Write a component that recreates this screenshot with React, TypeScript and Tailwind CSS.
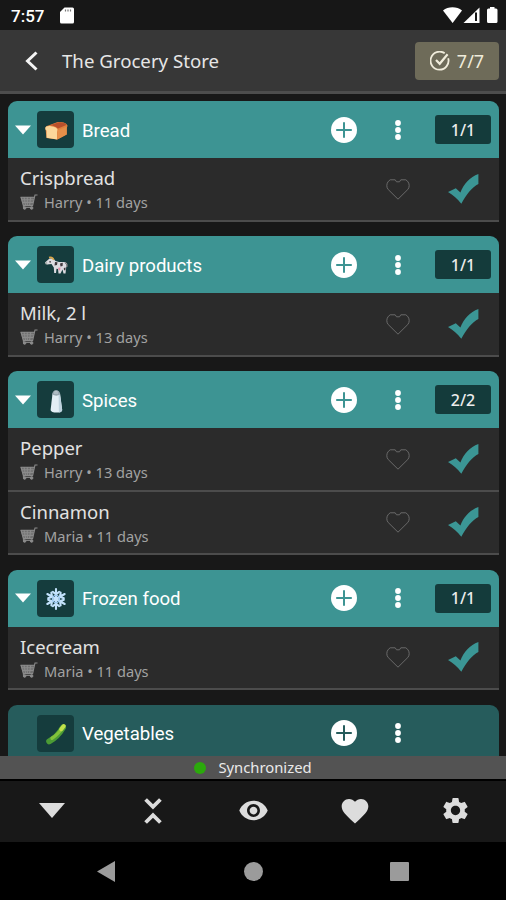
import { MdFavorite, MdSettings, MdVisibility } from "react-icons/md";

type Item = { name: string; user: string; days: number };
type Group = {
  name: string;
  icon: () => React.JSX.Element;
  count?: string;
  items: Item[];
};

function BreadIcon() {
  return (
    <svg width="26" height="26" viewBox="0 0 26 26">
      <path d="M2.5 10.5C2 8.5 4 7.7 6 7.2L14 4.2C18 3.2 24 4.6 24.5 7.6C24.6 8.8 23.8 9.4 23.6 10V16.5L14.5 21.5L3.5 20Z" fill="#df813e" />
      <path d="M7 7.2L15 4.4C19 3.6 23 5 23.4 7L15 10.5C13 8.6 10 7.4 7 7.2Z" fill="#b9502c" />
      <path d="M2.3 10.6C2.2 8.2 5 7.8 8 8.2C12 8.7 14.6 10 14.6 12.2C14.6 13.2 14 13.7 14 14.2V21.6L3.6 19.8V12.6C2.8 12.2 2.4 11.6 2.3 10.6Z" fill="#fbd79a" />
      <path d="M14.4 12.2L23.8 8.8V16.4L14.2 21.6Z" fill="#e58f49" />
    </svg>
  );
}

function CowIcon() {
  return (
    <svg width="26" height="26" viewBox="0 0 26 26">
      <path d="M2 9.5L6.5 5.5L10 5.2L12.5 8L16 9L21.5 9L23.5 12L22.5 20.5H20.5L19.5 16.5L17.5 20.5H15.5L15 16L13.5 15.8L13 20H11.2L10.8 14.5L8.5 11L4 11.6Z" fill="#dcdbe0" />
      <path d="M6 4.6C8 4 10 5 10.8 7" stroke="#d7a64a" strokeWidth="1.6" fill="none" />
      <path d="M12 9L14.5 9.2L14 12L11.5 12.4ZM17 10.5L19.8 9.8L19.6 13L17.5 13.6ZM6.2 8.2H8V9.6H6.4ZM20.8 15L22.6 14.5L22.4 17.2H21Z" fill="#40383c" />
      <path d="M15.2 14.8L17.6 14.6L17 17.5L15.4 17Z" fill="#e58aa2" />
      <path d="M22 9.5C24.2 9.6 24.2 12 23.8 14" stroke="#a89a9c" fill="none" />
      <path d="M2 9.4L4 8.8L4.4 11.4L2.6 11.3Z" fill="#aeb5b3" />
    </svg>
  );
}

function SaltIcon() {
  return (
    <svg width="26" height="26" viewBox="0 0 26 26">
      <path d="M9.5 5.5L7.6 22C7.6 25.4 19.2 25.4 19.2 22L17 5.5Z" fill="#e3eef5" />
      <path d="M15.6 7L17 6L19.2 22C19.1 24 17 24.5 15.9 24.5Z" fill="#bfd3df" />
      <path d="M9.2 6.5C9.2 .8 17.2 .8 17.2 6.5C15 8 11.5 8 9.2 6.5Z" fill="#98a8b1" />
      <path d="M11.5 3.2H14.5M11 5H15" stroke="#d6e0e5" strokeWidth=".7" />
    </svg>
  );
}

function SnowIcon() {
  return (
    <svg width="26" height="26" viewBox="0 0 26 26" fill="none" strokeLinecap="round">
      {[0, 60, 120, 180, 240, 300].map((angle) => (
        <g key={angle} transform={`rotate(${angle} 13 13)`}>
          <path d="M13 13V3M13 8.4L9.8 5.8M13 8.4L16.2 5.8" stroke="#c3e2fb" strokeWidth="2.1" />
        </g>
      ))}
      <circle cx="13" cy="13" r="3.6" stroke="#9cc8f0" strokeWidth="1.4" />
    </svg>
  );
}

function CucumberIcon() {
  return (
    <svg width="26" height="26" viewBox="0 0 26 26" fill="none" strokeLinecap="round">
      <path d="M6.2 20.3C11.5 17.6 16.4 12.6 20 6.5" stroke="#4b9b35" strokeWidth="6" />
      <path d="M9 17.3C13.5 14.4 17 10.8 19.8 6" stroke="#82c23a" strokeWidth="3.4" />
      <path d="M18.2 8.2L20.8 5" stroke="#c2e14c" strokeWidth="4" />
    </svg>
  );
}

function CartIcon() {
  return (
    <svg width="18" height="17" viewBox="0 0 18 17" fill="none" stroke="#8b8b8b">
      <path d="M.5 3H14L12.4 11H3Z" fill="#6f6f6f" stroke="none" />
      <path d="M.5 3.2H14M1.3 5.8H13.4M2 8.4H13M4 3L5.5 11M7.3 3V11M10.8 3L9.6 11M17.5 1H15L12.6 11.6H3.4L1 3" strokeWidth="1.1" />
      <path d="M3.4 11.6V13.4H12.8" />
      <circle cx="4.6" cy="14" r="1.3" fill="#8b8b8b" />
      <circle cx="11.6" cy="14" r="1.3" fill="#8b8b8b" />
    </svg>
  );
}

const groups: Group[] = [
  { name: "Bread", icon: BreadIcon, count: "1/1", items: [{ name: "Crispbread", user: "Harry", days: 11 }] },
  { name: "Dairy products", icon: CowIcon, count: "1/1", items: [{ name: "Milk, 2 l", user: "Harry", days: 13 }] },
  {
    name: "Spices",
    icon: SaltIcon,
    count: "2/2",
    items: [
      { name: "Pepper", user: "Harry", days: 13 },
      { name: "Cinnamon", user: "Maria", days: 11 },
    ],
  },
  { name: "Frozen food", icon: SnowIcon, count: "1/1", items: [{ name: "Icecream", user: "Maria", days: 11 }] },
  { name: "Vegetables", icon: CucumberIcon, items: [] },
];

function StatusBar() {
  return (
    <div className="flex h-[30px] shrink-0 items-center bg-[#171717] pl-[11px] pr-[8px] text-white">
      <span className="w-[49px] pt-0.5 font-['Roboto',sans-serif] text-[17px] font-medium leading-none">7:57</span>
      <svg width="14" height="17" viewBox="0 0 14 17">
        <path d="M4.5 .5H12.5Q14 .5 14 2V15Q14 16.5 12.5 16.5H1.5Q0 16.5 0 15V5Z" fill="white" />
        <path d="M5.5 2.5V4.5M8 2.5V4.5M10.5 2.5V4.5" stroke="#777" strokeWidth="1.2" />
      </svg>
      <svg className="ml-auto" width="55" height="18" viewBox="0 0 55 18" fill="white">
        <path d="M0 4.5C5 .2 14 .2 19 4.5L9.6 17Z" />
        <path d="M20.5 17L36.5 1.5V17Z" />
        <path d="M33 6.5V15" stroke="#171717" strokeWidth="2" />
        <path d="M47 1H51.5V2.5H53Q54.5 2.5 54.5 4V15.5Q54.5 17 53 17H45.5Q44 17 44 15.5V4Q44 2.5 45.5 2.5H47Z" />
      </svg>
    </div>
  );
}

function Header() {
  return (
    <div className="flex h-[64px] shrink-0 items-center border-b-[3px] border-[#4d4d4d] bg-[#373737] pl-[25px] pr-[7px]">
      <svg width="14" height="20" viewBox="0 0 14 20" fill="none">
        <path d="M11.5 1.5L2.5 10L11.5 18.5" stroke="#f4f4f4" strokeWidth="3" />
      </svg>
      <h1 className="ml-[23px] pt-0.5 text-[18.65px] leading-none text-[#e6e6e6]">The Grocery Store</h1>
      <button className="ml-auto flex h-[38px] w-[84px] items-center justify-center gap-[7px] rounded-[4px] bg-[#6e6b59] text-[18px] text-[#f0ecdb]">
        <svg width="20" height="20" viewBox="0 0 20 20" fill="none" stroke="#f0ecdb">
          <path d="M18.2 7.2A9 9 0 1 1 14.7 2.3" strokeWidth="1.8" />
          <path d="M6 9L9.7 12.8L17.6 3.2" strokeWidth="2.2" />
        </svg>
        <span className="pt-px">7/7</span>
      </button>
    </div>
  );
}

function ItemRow({ item }: { item: Item }) {
  return (
    <li className="flex h-[63.5px] items-center border-b-[2.5px] border-[#4c4c4c] bg-[#2b2b2b] pl-3 pr-[20px]">
      <div className="flex-1 pt-[3px]">
        <div className="text-[18.5px] leading-[24px] text-[#e2e2e2]">{item.name}</div>
        <div className="flex items-center gap-[6px] text-[14.6px] leading-[24px] text-[#a2a2a2]">
          <CartIcon />
          <span>
            {item.user} • {item.days} days
          </span>
        </div>
      </div>
      <svg className="mr-[38px]" width="24" height="22" viewBox="0 0 24 22" fill="none">
        <path d="M12 21.2L2.2 11.5Q.8 10 .8 7.5Q.8 5 2.5 3.2L4.2 1.8H9.2L10.5 3.8H13.5L14.8 1.8H19.8L21.5 3.2Q23.2 5 23.2 7.5Q23.2 10 21.8 11.5Z" stroke="#6a6a6a" />
      </svg>
      <svg width="31" height="30" viewBox="0 0 31 30">
        <path d="M0 18L7.8 14.2L12.4 18.6C15.5 10 22 3 30.4 0V10C24.5 13 18.5 20 13.3 29.8C9.5 25 5.3 21 0 18Z" fill="#3b9695" />
      </svg>
    </li>
  );
}

function GroupCard({ group }: { group: Group }) {
  const Icon = group.icon;
  const open = group.items.length > 0;
  return (
    <section className="shrink-0">
      <div className={`flex h-[57px] items-center rounded-t-[9px] pl-[7px] pr-2 ${open ? "bg-[#3d9493] text-[#3d9493]" : "bg-[#265c5c] text-[#265c5c]"}`}>
        <svg width="16" height="10" viewBox="0 0 16 10" className={open ? "" : "invisible"}>
          <path d="M0 .5H16L8 9.5Z" fill="white" />
        </svg>
        <div className="ml-[6px] flex size-[37px] items-center justify-center rounded-[4px] bg-[#153c3d] pt-0.5">
          <Icon />
        </div>
        <h2 className="ml-2 flex-1 pt-[3px] font-['Roboto',sans-serif] text-[18.6px] leading-none text-white">{group.name}</h2>
        <svg width="26" height="26" viewBox="0 0 26 26">
          <circle cx="13" cy="13" r="13" fill="white" />
          <path d="M13 5.2V20.8M5.2 13H20.8" stroke="currentColor" strokeWidth="2" />
        </svg>
        <svg className="ml-[38px]" width="6" height="20" viewBox="0 0 6 20" fill="white">
          <circle cx="3" cy="3" r="2.9" />
          <circle cx="3" cy="10" r="2.9" />
          <circle cx="3" cy="17" r="2.9" />
        </svg>
        <div className={`ml-[34px] flex h-[29px] w-[56px] items-center justify-center rounded-[3px] text-[16px] font-medium text-[#ececec] ${group.count ? "bg-[#143b3b]" : ""}`}>
          {group.count}
        </div>
      </div>
      <ul>
        {group.items.map((item) => (
          <ItemRow key={item.name} item={item} />
        ))}
      </ul>
    </section>
  );
}

function Toolbar() {
  return (
    <div className="grid h-[63px] shrink-0 grid-cols-5 place-items-center border-t-2 border-black bg-[#181818] pb-0.5 pl-px text-[#dcdcdc]">
      <svg width="26" height="15" viewBox="0 0 26 15">
        <path d="M0 0H26L13 15Z" fill="currentColor" />
      </svg>
      <svg width="18" height="26" viewBox="0 0 18 26" fill="none" stroke="currentColor" strokeWidth="3.8">
        <path d="M1.6 1.5L9 8.9L16.4 1.5M1.6 24.5L9 17.1L16.4 24.5" />
      </svg>
      <MdVisibility size={31} />
      <MdFavorite size={32} />
      <MdSettings size={31} />
    </div>
  );
}

function NavigationBar() {
  return (
    <div className="flex h-[58px] shrink-0 items-center justify-between bg-black pl-[97px] pr-[97px]">
      <svg width="18" height="21" viewBox="0 0 18 21">
        <path d="M0 10.5L18 0V21Z" fill="#9b9b9b" />
      </svg>
      <div className="ml-px size-[19px] rounded-full bg-[#9b9b9b]" />
      <div className="size-[19px] rounded-[1px] bg-[#9b9b9b]" />
    </div>
  );
}

export default function App() {
  return (
    <div className="flex h-[900px] w-[506px] flex-col overflow-hidden bg-[#181818] font-['Noto_Sans',sans-serif]">
      <StatusBar />
      <Header />
      <main className="flex min-h-0 flex-1 flex-col gap-[14.5px] overflow-hidden pl-2 pr-[7px] pt-[7px]">
        {groups.map((group) => (
          <GroupCard key={group.name} group={group} />
        ))}
      </main>
      <div className="flex h-[23px] shrink-0 items-center justify-center gap-3 bg-[#535353] text-[14.8px] leading-none text-[#eaeaea]">
        <span className="size-3 rounded-full bg-[#2ba90c]" />
        <span>Synchronized</span>
      </div>
      <Toolbar />
      <NavigationBar />
    </div>
  );
}
